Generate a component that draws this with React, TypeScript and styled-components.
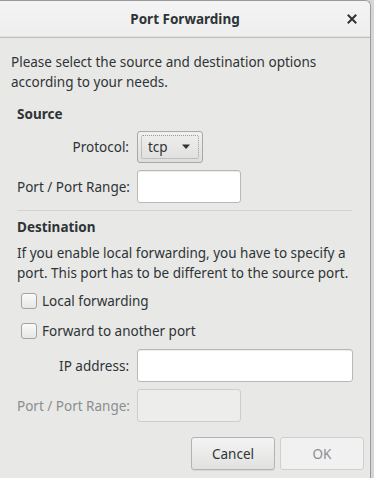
import React from "react";
import styled, { createGlobalStyle } from "styled-components";

const GlobalStyle = createGlobalStyle`
  html, body {
    margin: 0;
    padding: 0;
    background: #d6d6d4;
  }
  body {
    font-family: "Noto Sans", "DejaVu Sans", sans-serif;
    font-size: 13.5px;
    color: #2e3436;
  }
`;

const Window = styled.div`
  width: 371px;
  height: 478px;
  box-sizing: border-box;
  border-top: 1px solid #9a9a98;
  border-right: 1px solid #9a9a98;
  border-top-right-radius: 6px;
  background: #e8e8e7;
  overflow: hidden;
  display: flex;
  flex-direction: column;
`;

const TitleBar = styled.div`
  height: 36px;
  flex: none;
  display: flex;
  align-items: center;
  justify-content: center;
  position: relative;
  background: linear-gradient(#f4f4f4, #eeeeee);
  border-bottom: 1px solid #bfbfbd;
  box-shadow: inset 0 -1px 0 #e2e2e1;
`;

const Title = styled.span`
  font-weight: bold;
  font-size: 13.5px;
  color: #2e3436;
`;

const CloseButton = styled.span`
  position: absolute;
  right: 10px;
  top: 50%;
  transform: translateY(-50%);
  width: 16px;
  height: 16px;
  display: flex;
  align-items: center;
  justify-content: center;
`;

const Body = styled.div`
  display: flex;
  flex-direction: column;
  padding: 14px 0 0 11px;
`;

const Intro = styled.p`
  margin: 0;
  line-height: 20px;
`;

const Section = styled.div`
  display: flex;
  flex-direction: column;
  padding: 0 18px 0 6px;
`;

const SectionTitle = styled.div`
  font-weight: bold;
  line-height: 20px;
  margin-top: ${(p: { $top: number }) => p.$top}px;
`;

const FormGrid = styled.div`
  display: grid;
  grid-template-columns: 112px auto;
  column-gap: 8px;
  row-gap: 7px;
  align-items: center;
  margin-top: ${(p: { $top: number }) => p.$top}px;
`;

const Label = styled.label<{ $disabled?: boolean }>`
  text-align: right;
  color: ${(p) => (p.$disabled ? "#8b8e8f" : "#2e3436")};
  white-space: nowrap;
`;

const Entry = styled.div<{ $wide?: boolean; $disabled?: boolean }>`
  width: ${(p) => (p.$wide ? "216px" : "104px")};
  height: 33px;
  box-sizing: border-box;
  border-radius: 3px;
  border: 1px solid ${(p) => (p.$disabled ? "#cdcdcb" : "#b8b8b6")};
  background: ${(p) => (p.$disabled ? "#ededec" : "#ffffff")};
  box-shadow: ${(p) => (p.$disabled ? "none" : "inset 0 1px 0 #ececec")};
`;

const Combo = styled.div`
  width: 66px;
  height: 32px;
  box-sizing: border-box;
  border: 1px solid #a8a8a6;
  border-radius: 3px;
  background: linear-gradient(#f0f0ef, #dededd);
  padding: 3px;
`;

const ComboInner = styled.div`
  height: 100%;
  box-sizing: border-box;
  border: 1px dotted #9a9a98;
  border-radius: 2px;
  display: flex;
  align-items: center;
  justify-content: space-between;
  padding: 0 7px 0 6px;
`;

const Separator = styled.div`
  height: 1px;
  background: #d2d2d0;
  margin: 7px 0 0 0;
`;

const Description = styled.p`
  margin: 6px 0 0 0;
  line-height: 20px;
`;

const CheckRow = styled.label`
  display: flex;
  align-items: center;
  gap: 5px;
  height: 20px;
  margin-top: ${(p: { $top: number }) => p.$top}px;
  padding-left: 4px;
`;

const CheckBox = styled.span`
  width: 14px;
  height: 14px;
  border: 1px solid #a3a3a1;
  border-radius: 3px;
  background: linear-gradient(#fafafa, #e6e6e5);
`;

const ButtonRow = styled.div`
  display: flex;
  justify-content: flex-end;
  gap: 5px;
  padding: 15px 6px 0 0;
`;

const Button = styled.div<{ $disabled?: boolean }>`
  width: 84px;
  height: 33px;
  box-sizing: border-box;
  border-radius: 3px;
  display: flex;
  align-items: center;
  justify-content: center;
  border: 1px solid ${(p) => (p.$disabled ? "#cfcfcd" : "#b3b3b1")};
  background: ${(p) =>
    p.$disabled ? "#f1f1f1" : "linear-gradient(#f4f4f4, #e1e1e0)"};
  color: ${(p) => (p.$disabled ? "#8b8e8f" : "#2e3436")};
  box-shadow: ${(p) => (p.$disabled ? "none" : "0 1px 0 #d8d8d7")};
`;

export default function App() {
  return (
    <>
      <GlobalStyle />
      <Window>
        <TitleBar>
          <Title>Port Forwarding</Title>
          <CloseButton>
            <svg width="10" height="10" viewBox="0 0 10 10">
              <path
                d="M1.5 1.5 L8.5 8.5 M8.5 1.5 L1.5 8.5"
                stroke="#2e3436"
                strokeWidth="2"
                strokeLinecap="square"
              />
            </svg>
          </CloseButton>
        </TitleBar>
        <Body>
          <Intro>
            Please select the source and destination options
            <br />
            according to your needs.
          </Intro>
          <Section>
            <SectionTitle $top={12}>Source</SectionTitle>
            <FormGrid $top={7}>
              <Label>Protocol:</Label>
              <Combo>
                <ComboInner>
                  <span>tcp</span>
                  <svg width="10" height="6" viewBox="0 0 10 6">
                    <path d="M1 0.5 L9 0.5 L5 5 Z" fill="#2e3436" />
                  </svg>
                </ComboInner>
              </Combo>
              <Label>Port / Port Range:</Label>
              <Entry />
            </FormGrid>
            <Separator />
            <SectionTitle $top={6}>Destination</SectionTitle>
            <Description>
              If you enable local forwarding, you have to specify a
              <br />
              port. This port has to be different to the source port.
            </Description>
            <CheckRow $top={8}>
              <CheckBox />
              Local forwarding
            </CheckRow>
            <CheckRow $top={10}>
              <CheckBox />
              Forward to another port
            </CheckRow>
            <FormGrid $top={8}>
              <Label>IP address:</Label>
              <Entry $wide />
              <Label $disabled>Port / Port Range:</Label>
              <Entry $disabled />
            </FormGrid>
          </Section>
          <ButtonRow>
            <Button>Cancel</Button>
            <Button $disabled>OK</Button>
          </ButtonRow>
        </Body>
      </Window>
    </>
  );
}
